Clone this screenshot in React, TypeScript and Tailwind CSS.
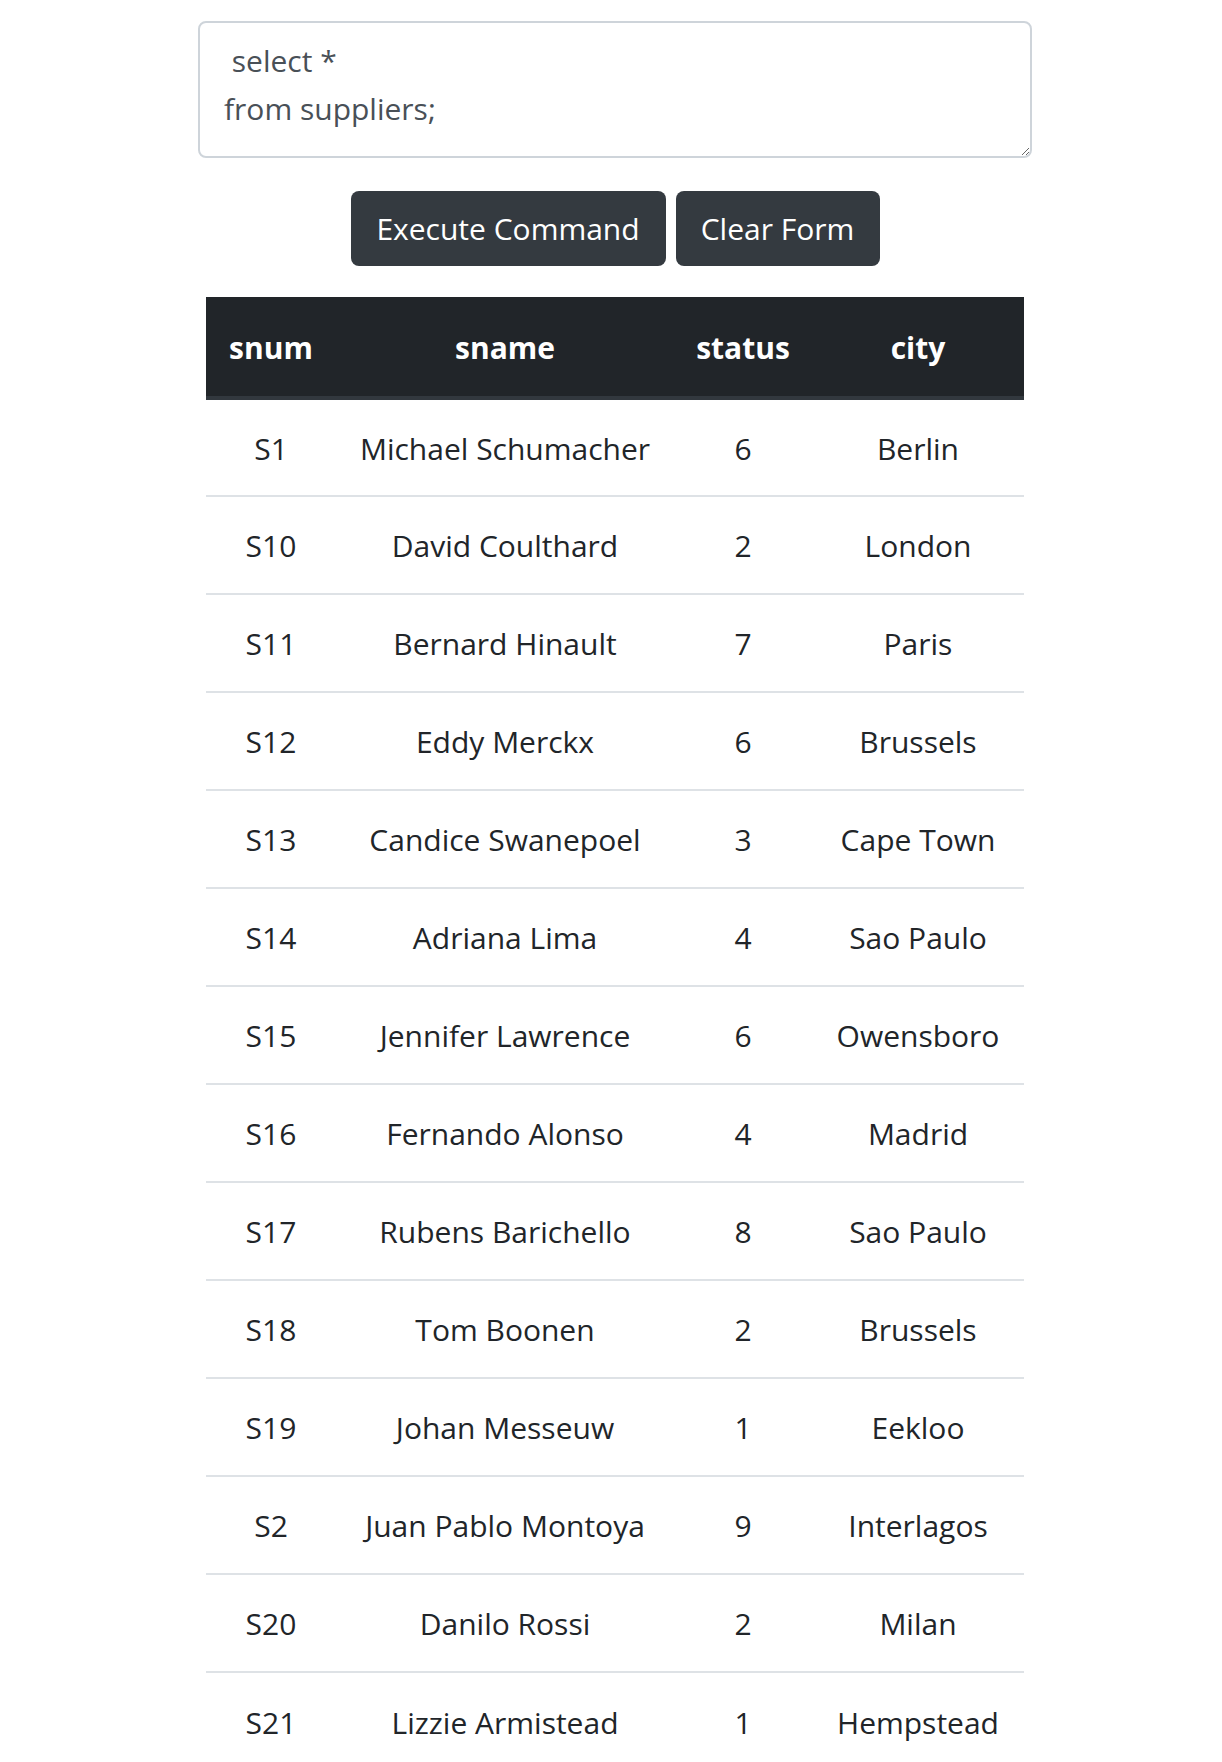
import React from 'react';

const ROWS: [string, string, number, string][] = [
  ['S1', 'Michael Schumacher', 6, 'Berlin'],
  ['S10', 'David Coulthard', 2, 'London'],
  ['S11', 'Bernard Hinault', 7, 'Paris'],
  ['S12', 'Eddy Merckx', 6, 'Brussels'],
  ['S13', 'Candice Swanepoel', 3, 'Cape Town'],
  ['S14', 'Adriana Lima', 4, 'Sao Paulo'],
  ['S15', 'Jennifer Lawrence', 6, 'Owensboro'],
  ['S16', 'Fernando Alonso', 4, 'Madrid'],
  ['S17', 'Rubens Barichello', 8, 'Sao Paulo'],
  ['S18', 'Tom Boonen', 2, 'Brussels'],
  ['S19', 'Johan Messeuw', 1, 'Eekloo'],
  ['S2', 'Juan Pablo Montoya', 9, 'Interlagos'],
  ['S20', 'Danilo Rossi', 2, 'Milan'],
  ['S21', 'Lizzie Armistead', 1, 'Hempstead'],
];

const COLS = ['snum', 'sname', 'status', 'city'];
const WIDTHS = ['w-[130px]', 'w-[338px]', 'w-[138px]', 'w-[212px]'];

export default function App() {
  return (
    <div className="min-h-screen bg-white pt-[21px] text-[#212529] font-['Open_Sans',sans-serif] text-[30px] leading-[48px]">
      <div className="ml-[198px] w-[834px]">
        <textarea
          defaultValue={' select *\nfrom suppliers;'}
          className="block w-full h-[137px] px-[24px] pt-[14px] pb-[10px] border-2 border-[#ced4da] rounded-[8px] text-[#495057] text-[30px] leading-[48px] outline-none"
        />

        <div className="flex justify-center gap-[10px] mt-[33px]">
          <button className="w-[315px] h-[75px] rounded-[8px] bg-[#343a40] text-white text-[30px]">
            Execute Command
          </button>
          <button className="w-[204px] h-[75px] rounded-[8px] bg-[#343a40] text-white text-[30px]">
            Clear Form
          </button>
        </div>

        <table className="mx-auto mt-[31px] w-[818px] table-fixed border-collapse">
          <thead>
            <tr className="bg-[#212529] text-white">
              {COLS.map((c, i) => (
                <th
                  key={c}
                  className={`${WIDTHS[i]} h-[101px] pt-[2px] border-b-4 border-[#32383e] font-bold text-center`}
                >
                  {c}
                </th>
              ))}
            </tr>
          </thead>
          <tbody>
            {ROWS.map((r, idx) => (
              <tr key={r[0]} className={idx > 0 ? 'border-t-2 border-[#dee2e6]' : ''}>
                {r.map((v, i) => (
                  <td key={i} className="h-[98px] pt-[2px] text-center align-middle">
                    {v}
                  </td>
                ))}
              </tr>
            ))}
          </tbody>
        </table>
      </div>
    </div>
  );
}
